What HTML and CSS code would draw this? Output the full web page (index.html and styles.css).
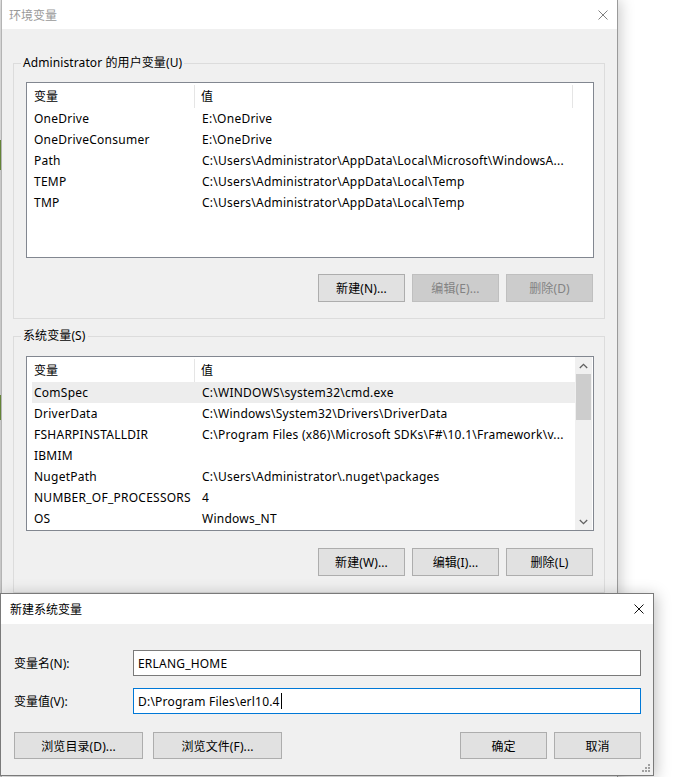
FILE: index.html
```html
<!DOCTYPE html>
<html lang="zh-CN">
<head>
<meta charset="utf-8">
<title>环境变量</title>
<link rel="stylesheet" href="styles.css">
</head>
<body>
<div class="desk">
  <div class="edge"></div>

  <div class="win main">
    <div class="titlebar">
      <span class="title inactive">环境变量</span>
      <svg class="close" width="10" height="10" viewBox="0 0 10 10"><path d="M0.5 0.5L9.5 9.5M9.5 0.5L0.5 9.5" stroke="#808080" stroke-width="1" fill="none"/></svg>
    </div>
    <div class="body">
      <div class="group g1">
        <span class="legend">Administrator 的用户变量(U)</span>
        <div class="list l1">
          <div class="lcontent">
            <div class="lhead"><span class="c1">变量</span><span class="c2">值</span><span class="c3"></span></div>
            <div class="row"><span class="c1">OneDrive</span><span class="c2">E:\OneDrive</span></div>
            <div class="row"><span class="c1">OneDriveConsumer</span><span class="c2">E:\OneDrive</span></div>
            <div class="row"><span class="c1">Path</span><span class="c2">C:\Users\Administrator\AppData\Local\Microsoft\WindowsA...</span></div>
            <div class="row"><span class="c1">TEMP</span><span class="c2">C:\Users\Administrator\AppData\Local\Temp</span></div>
            <div class="row"><span class="c1">TMP</span><span class="c2">C:\Users\Administrator\AppData\Local\Temp</span></div>
          </div>
        </div>
        <div class="btns">
          <button class="btn">新建(N)...</button>
          <button class="btn" disabled>编辑(E)...</button>
          <button class="btn" disabled>删除(D)</button>
        </div>
      </div>

      <div class="group g2">
        <span class="legend">系统变量(S)</span>
        <div class="list l2">
          <div class="lcontent">
            <div class="lhead"><span class="c1">变量</span><span class="c2">值</span></div>
            <div class="row hover"><span class="c1">ComSpec</span><span class="c2">C:\WINDOWS\system32\cmd.exe</span></div>
            <div class="row"><span class="c1">DriverData</span><span class="c2">C:\Windows\System32\Drivers\DriverData</span></div>
            <div class="row"><span class="c1">FSHARPINSTALLDIR</span><span class="c2">C:\Program Files (x86)\Microsoft SDKs\F#\10.1\Framework\v...</span></div>
            <div class="row"><span class="c1">IBMIM</span><span class="c2"></span></div>
            <div class="row"><span class="c1">NugetPath</span><span class="c2">C:\Users\Administrator\.nuget\packages</span></div>
            <div class="row"><span class="c1">NUMBER_OF_PROCESSORS</span><span class="c2">4</span></div>
            <div class="row"><span class="c1">OS</span><span class="c2">Windows_NT</span></div>
          </div>
          <div class="vscroll">
            <div class="arrow"><svg width="9" height="6" viewBox="0 0 9 6"><path d="M0.8 5L4.5 1.3L8.2 5" stroke="#606060" stroke-width="1.3" fill="none"/></svg></div>
            <div class="track"><div class="thumb"></div></div>
            <div class="arrow"><svg width="9" height="6" viewBox="0 0 9 6"><path d="M0.8 1L4.5 4.7L8.2 1" stroke="#606060" stroke-width="1.3" fill="none"/></svg></div>
          </div>
        </div>
        <div class="btns">
          <button class="btn">新建(W)...</button>
          <button class="btn">编辑(I)...</button>
          <button class="btn">删除(L)</button>
        </div>
      </div>
    </div>
  </div>

  <div class="win dlg">
    <div class="titlebar dtitle">
      <span class="title">新建系统变量</span>
      <svg class="close" width="10" height="10" viewBox="0 0 10 10"><path d="M0.5 0.5L9.5 9.5M9.5 0.5L0.5 9.5" stroke="#111" stroke-width="1" fill="none"/></svg>
    </div>
    <div class="dbody">
      <div class="field">
        <span class="flabel">变量名(N):</span>
        <div class="input">ERLANG_HOME</div>
      </div>
      <div class="field">
        <span class="flabel">变量值(V):</span>
        <div class="input focus">D:\Program Files\erl10.4<span class="caret"></span></div>
      </div>
      <div class="dbtns">
        <div class="left">
          <button class="btn wide">浏览目录(D)...</button>
          <button class="btn wide">浏览文件(F)...</button>
        </div>
        <div class="right">
          <button class="btn">确定</button>
          <button class="btn">取消</button>
        </div>
      </div>
    </div>
    <svg class="grip" width="8" height="8" viewBox="0 0 8 8"><g fill="#a0a0a0"><rect x="6" y="0" width="2" height="2"/><rect x="3" y="3" width="2" height="2"/><rect x="6" y="3" width="2" height="2"/><rect x="0" y="6" width="2" height="2"/><rect x="3" y="6" width="2" height="2"/><rect x="6" y="6" width="2" height="2"/></g></svg>
  </div>
</div>
</body>
</html>
```

FILE: styles.css
```css
* { box-sizing: border-box; }

html, body {
  margin: 0;
  padding: 0;
}

body {
  font-family: "Noto Sans", "Noto Sans CJK SC", sans-serif;
  font-size: 12px;
  color: #000;
  background: #ffffff;
}

.desk {
  position: relative;
  width: 678px;
  height: 777px;
  overflow: hidden;
  background: #ffffff;
}

.edge {
  position: absolute;
  left: 0;
  top: 0;
  width: 2px;
  height: 777px;
  background: linear-gradient(#e6e6e6 0 140px, #6d8f3c 140px 170px, #d8d8d8 170px 395px, #6d8f3c 395px 420px, #d8d8d8 420px);
}

.win {
  position: absolute;
  display: flex;
  flex-direction: column;
  background: #f0f0f0;
}

.main {
  left: 1px;
  top: 0;
  width: 617px;
  height: 800px;
  border-left: 1px solid #b4b4b4;
  border-right: 1px solid #9a9a9a;
  box-shadow: 2px 0 14px rgba(0, 0, 0, 0.22);
}

.titlebar {
  height: 29px;
  flex: none;
  background: #ffffff;
  display: flex;
  align-items: center;
  justify-content: space-between;
  padding: 0 9px 0 7px;
}

.title {
  font-size: 12px;
  color: #000;
}

.title.inactive { color: #999999; }

.close { display: block; }

.body {
  padding: 34px 0 0 11px;
  display: flex;
  flex-direction: column;
  gap: 17px;
}

.group {
  position: relative;
  width: 592px;
  border: 1px solid #dcdcdc;
  padding: 18px 10px 16px 12px;
  display: flex;
  flex-direction: column;
  gap: 16px;
}

.g2 { padding-top: 19px; gap: 17px; }

.legend {
  position: absolute;
  left: 7px;
  top: -9px;
  padding: 0 2px;
  line-height: 16px;
  background: #f0f0f0;
  letter-spacing: 0.1px;
}

.list {
  width: 568px;
  background: #ffffff;
  border: 1px solid #828790;
  display: flex;
}

.l1 { height: 176px; }
.l2 { height: 175px; }

.lcontent {
  flex: 1;
  min-width: 0;
}

.lhead {
  height: 25px;
  display: flex;
  align-items: center;
  padding-left: 5px;
}

.lhead .c1 {
  width: 163px;
  height: 23px;
  line-height: 23px;
  border-right: 1px solid #e5e5e5;
  padding-left: 2px;
  align-self: flex-end;
}

.lhead .c2 {
  width: 378px;
  height: 23px;
  line-height: 23px;
  padding-left: 6px;
  align-self: flex-end;
}

.l1 .lhead .c2 { border-right: 1px solid #e5e5e5; }

.row {
  height: 21px;
  display: flex;
  align-items: center;
  margin-left: 5px;
  white-space: nowrap;
  letter-spacing: 0.25px;
}

.row.hover { background: #ededed; }

.row .c1 {
  width: 163px;
  padding-left: 2px;
  flex: none;
}

.row .c2 {
  padding-left: 7px;
  overflow: hidden;
}

.vscroll {
  width: 17px;
  margin-right: 1px;
  background: #f0f0f0;
  display: flex;
  flex-direction: column;
}

.arrow {
  height: 17px;
  display: flex;
  align-items: center;
  justify-content: center;
}

.arrow svg { display: block; }

.track {
  flex: 1;
  padding: 0 1px;
}

.thumb {
  height: 46px;
  background: #cdcdcd;
}

.btns {
  display: flex;
  justify-content: flex-end;
  gap: 7px;
  padding-right: 1px;
}

.btn {
  width: 87px;
  height: 28px;
  font: inherit;
  color: #000;
  background: #e1e1e1;
  border: 1px solid #adadad;
  padding: 0;
  margin: 0;
  border-radius: 0;
  letter-spacing: 0.1px;
}

.btn:disabled {
  background: #cccccc;
  border-color: #bfbfbf;
  color: #838383;
}

.dlg {
  left: 0;
  top: 593px;
  width: 654px;
  height: 183px;
  border: 1px solid #7a7a7a;
  box-shadow: 2px 2px 14px rgba(0, 0, 0, 0.25);
}

.dtitle {
  height: 30px;
  padding: 0 9px 0 9px;
}

.dbody {
  flex: 1;
  padding: 26px 12px 0 13px;
  display: flex;
  flex-direction: column;
  gap: 12px;
}

.field {
  display: flex;
  align-items: center;
}

.flabel {
  width: 119px;
  flex: none;
}

.input {
  flex: 1;
  height: 26px;
  background: #ffffff;
  border: 1px solid #7a7a7a;
  padding: 0 4px;
  display: flex;
  align-items: center;
  white-space: nowrap;
  letter-spacing: 0.2px;
}

.input.focus { border-color: #0078d7; }

.caret {
  display: inline-block;
  width: 1px;
  height: 16px;
  background: #000;
  margin-left: 1px;
}

.dbtns {
  margin-top: 6px;
  display: flex;
  justify-content: space-between;
}

.dbtns .left { display: flex; gap: 10px; }
.dbtns .right { display: flex; gap: 7px; }

.dbtns .btn { height: 27px; }
.btn.wide { width: 129px; }

.grip {
  position: absolute;
  right: 3px;
  bottom: 3px;
}
```
